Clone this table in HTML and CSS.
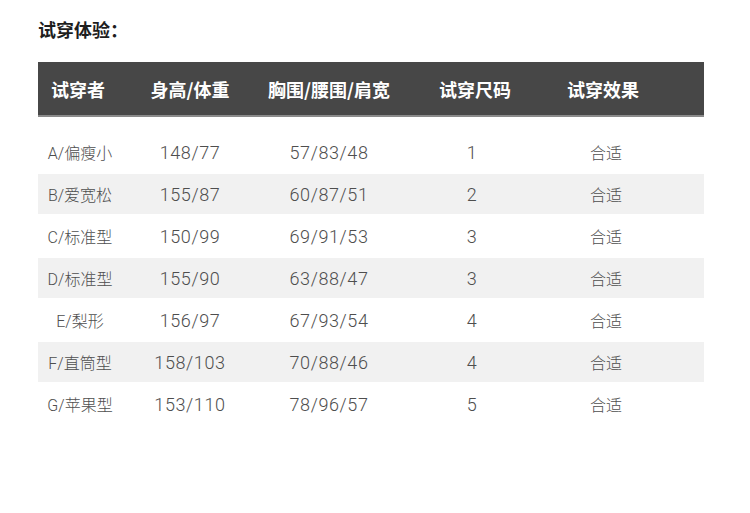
FILE: index.html
```html
<!DOCTYPE html>
<html lang="zh-CN">
<head>
<meta charset="utf-8">
<title>试穿体验</title>
<link rel="stylesheet" href="styles.css">
</head>
<body>
<div class="page">
  <h1 class="title">试穿体验：</h1>
  <div class="table">
    <div class="row head">
      <div class="cell c1">试穿者</div>
      <div class="cell c2">身高/体重</div>
      <div class="cell c3">胸围/腰围/肩宽</div>
      <div class="cell c4">试穿尺码</div>
      <div class="cell c5">试穿效果</div>
      <div class="cell"></div>
    </div>
    <div class="body">
      <div class="row">
        <div class="cell name">A/偏瘦小</div><div class="cell num">148/77</div><div class="cell num">57/83/48</div><div class="cell num">1</div><div class="cell cn">合适</div><div class="cell"></div>
      </div>
      <div class="row alt">
        <div class="cell name">B/爱宽松</div><div class="cell num">155/87</div><div class="cell num">60/87/51</div><div class="cell num">2</div><div class="cell cn">合适</div><div class="cell"></div>
      </div>
      <div class="row">
        <div class="cell name">C/标准型</div><div class="cell num">150/99</div><div class="cell num">69/91/53</div><div class="cell num">3</div><div class="cell cn">合适</div><div class="cell"></div>
      </div>
      <div class="row alt">
        <div class="cell name">D/标准型</div><div class="cell num">155/90</div><div class="cell num">63/88/47</div><div class="cell num">3</div><div class="cell cn">合适</div><div class="cell"></div>
      </div>
      <div class="row">
        <div class="cell name">E/梨形</div><div class="cell num">156/97</div><div class="cell num">67/93/54</div><div class="cell num">4</div><div class="cell cn">合适</div><div class="cell"></div>
      </div>
      <div class="row alt">
        <div class="cell name">F/直筒型</div><div class="cell num">158/103</div><div class="cell num">70/88/46</div><div class="cell num">4</div><div class="cell cn">合适</div><div class="cell"></div>
      </div>
      <div class="row">
        <div class="cell name">G/苹果型</div><div class="cell num">153/110</div><div class="cell num">78/96/57</div><div class="cell num">5</div><div class="cell cn">合适</div><div class="cell"></div>
      </div>
    </div>
  </div>
</div>
</body>
</html>
```
FILE: styles.css
```css
html, body {
  margin: 0;
  padding: 0;
  background: #ffffff;
}

.page {
  padding: 18px 0 0 38px;
  width: 666px;
  font-family: "Roboto", "Noto Sans CJK SC", sans-serif;
}

.title {
  margin: 0;
  font-family: "Noto Sans CJK SC", sans-serif;
  font-size: 18px;
  line-height: 22px;
  font-weight: 700;
  color: #1e1e1e;
}

.table {
  margin-top: 22px;
}

.row {
  display: grid;
  grid-template-columns: 84px 136px 142px 144px 124px 1fr;
  align-items: center;
}

.cell {
  text-align: center;
  white-space: nowrap;
}

.head {
  height: 53px;
  background: #474747;
  border-bottom: 2px solid #8a8a8a;
  color: #ffffff;
  font-family: "Noto Sans CJK SC", sans-serif;
  font-weight: 700;
  font-size: 18px;
}

.head .c1 { text-indent: -4px; }
.head .c4 { padding-left: 6px; }
.head .c5 { text-indent: -6px; }

.body {
  padding-top: 13px;
}

.body .row {
  color: #4e4e4e;
  height: 44px;
}

.body .row.alt {
  height: 40px;
  background: #f1f1f1;
}

.name {
  font-size: 16px;
  font-weight: 300;
}

.num {
  font-size: 18px;
  font-weight: 300;
  letter-spacing: 0.6px;
}

.cn {
  font-family: "Noto Sans CJK SC", sans-serif;
  font-size: 16px;
  font-weight: 300;
}
```
